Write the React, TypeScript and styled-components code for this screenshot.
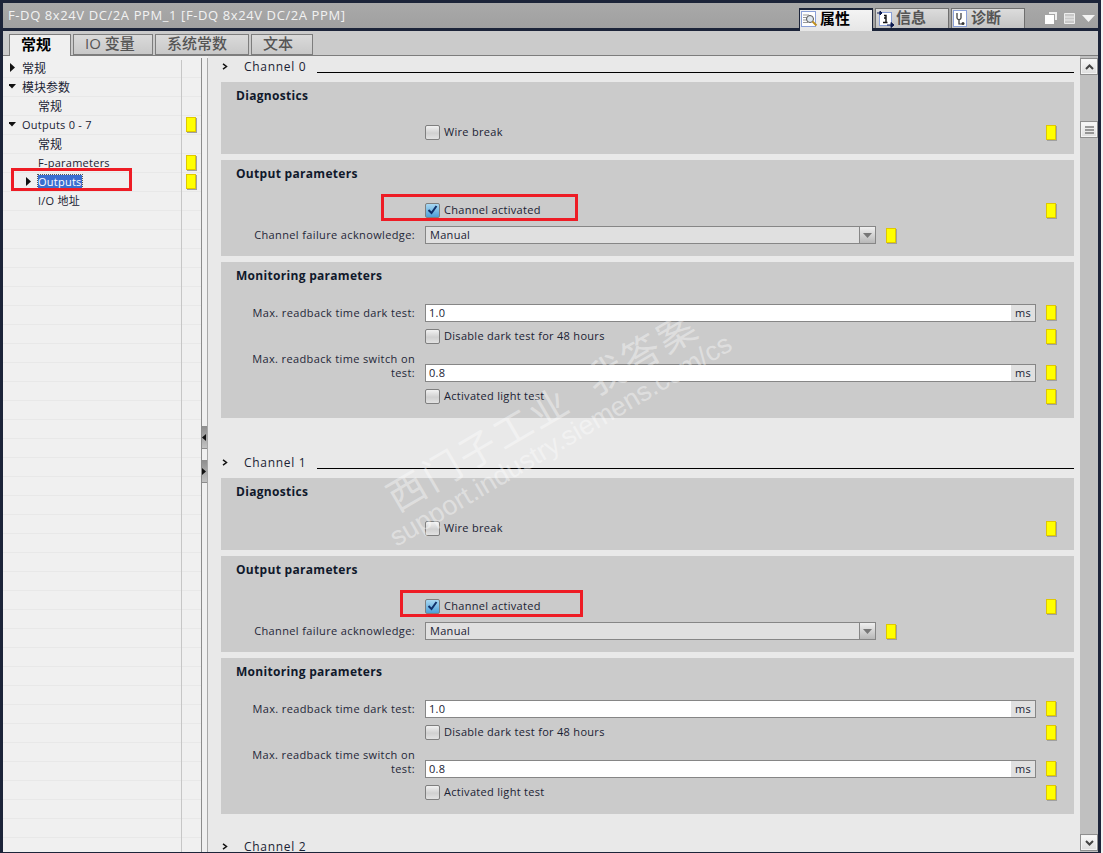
import React from "react";
import styled, { createGlobalStyle } from "styled-components";

const Global = createGlobalStyle`
  html, body { margin: 0; padding: 0; background: #1c2439; }
  #root { width: 1103px; height: 853px; }
  * { box-sizing: border-box; }
`;

const FONT = `"Open Sans", "Noto Sans", "Noto Sans CJK SC", sans-serif`;

const Frame = styled.div`
  position: relative;
  width: 1103px;
  height: 853px;
  padding: 3px 0 1px 3px;
  border-right: 2px solid #f2f2f2;
  background: #1c2439;
  overflow: hidden;
  font-family: ${FONT};
  font-size: 11px;
  color: #1a2233;
  display: flex;
  flex-direction: column;
`;

const TitleBar = styled.div`
  flex: none;
  height: 25px;
  margin-right: 3px;
  background: linear-gradient(#a9a9a9, #a0a0a0);
  display: flex;
  justify-content: space-between;
`;

const TitleText = styled.div`
  padding-left: 5px;
  line-height: 25px;
  font-size: 13px;
  font-weight: 500;
  color: #f2f2f2;
  white-space: nowrap;
  letter-spacing: 0.6px;
`;

const ViewTabs = styled.div`
  height: 25px;
  display: flex;
  align-items: flex-start;
  padding-top: 5px;
  gap: 2px;
`;

const ViewTab = styled.div<{ $active?: boolean }>`
  width: 74px;
  height: ${(p) => (p.$active ? 23 : 20)}px;
  display: flex;
  align-items: flex-start;
  gap: 2px;
  padding: 1px 0 0 1px;
  border: 1px solid ${(p) => (p.$active ? "#1c2439" : "#6f6f6f")};
  border-bottom: none;
  border-top-width: ${(p) => (p.$active ? 2 : 1)}px;
  background: ${(p) => (p.$active ? "linear-gradient(#f4f4f4, #e6e6e6)" : "linear-gradient(#dcdcdc, #c4c4c4)")};
  font-size: 15px;
  line-height: 15px;
  font-weight: 700;
  color: ${(p) => (p.$active ? "#000" : "#555")};
  position: relative;
  z-index: 1;
`;

const WindowButtons = styled.div`
  display: flex;
  align-items: center;
  gap: 7px;
  width: 71px;
  padding: 0 0 0 18px;
  height: 20px;
`;

const DarkLine = styled.div`
  flex: 0 0 3px;
  margin-right: 3px;
`;

const TabBar = styled.div`
  flex: none;
  height: 25px;
  margin-right: 3px;
  background: #cbcbcb;
  border-bottom: 1px solid #7d7d7d;
  display: flex;
  align-items: flex-end;
  padding-left: 6px;
  gap: 2px;
`;

const Tab = styled.div<{ $active?: boolean; $w: number }>`
  width: ${(p) => p.$w}px;
  height: ${(p) => (p.$active ? 22 : 21)}px;
  margin-bottom: ${(p) => (p.$active ? -1 : 0)}px;
  display: flex;
  align-items: center;
  padding: 0 0 4px 11px;
  border: 1px solid #7d7d7d;
  border-bottom: ${(p) => (p.$active ? "none" : "1px solid #7d7d7d")};
  background: ${(p) => (p.$active ? "#f0f0f0" : "linear-gradient(#dadada, #c8c8c8)")};
  font-size: 15px;
  font-weight: ${(p) => (p.$active ? 700 : 500)};
  color: ${(p) => (p.$active ? "#000" : "#555")};
  white-space: nowrap;
`;

const Body = styled.div`
  flex: 1;
  min-height: 0;
  display: flex;
  margin-right: 3px;
  background: #f0f0f0;
`;

const Tree = styled.div`
  flex: 0 0 198px;
  padding-top: 2px;
  background-color: #f0f0f0;
  background-image: repeating-linear-gradient(
    to bottom,
    transparent 0,
    transparent 18px,
    #e8e8e8 18px,
    #e8e8e8 19px
  );
  background-position: 0 3px;
  position: relative;
`;

const TreeDivider = styled.div`
  position: absolute;
  left: 178px;
  top: 4px;
  bottom: 0;
  width: 1px;
  background: #c6c6c6;
`;

const TreeRow = styled.div<{ $pad: number }>`
  height: 19px;
  display: flex;
  align-items: center;
  padding-left: ${(p) => p.$pad}px;
  position: relative;
`;

const TreeArrow = styled.svg`
  width: 7px;
  height: 9px;
  flex: 0 0 7px;
  margin-right: 6px;
`;

const TreeLabel = styled.span<{ $indent?: boolean; $selected?: boolean; $cjk?: boolean }>`
  margin-left: ${(p) => (p.$indent ? 16 : 0)}px;
  margin-top: ${(p) => (p.$cjk ? 2 : 0)}px;
  background: ${(p) => (p.$selected ? "#3a6ed0" : "transparent")};
  color: ${(p) => (p.$selected ? "#fff" : "#1a2233")};
  outline: ${(p) => (p.$selected ? "1px dotted #555" : "none")};
  font-size: ${(p) => (p.$cjk ? 12 : 11)}px;
  line-height: ${(p) => (p.$selected ? "13px" : "15px")};
  letter-spacing: ${(p) => (p.$cjk ? 0 : 0.25)}px;
  white-space: nowrap;
`;

const TreeMarkerSlot = styled.div`
  position: absolute;
  left: 183px;
  top: 2px;
`;

const Splitter = styled.div`
  flex: 0 0 7px;
  border-left: 1px solid #8c8c8c;
  border-right: 1px solid #a8a8a8;
  margin-top: 2px;
  background: #f0f0f0;
  padding-top: 368px;
  display: flex;
  flex-direction: column;
  gap: 11px;
`;

const SplitButton = styled.div`
  height: 23px;
  background: linear-gradient(#8d8d8d, #c2c2c2);
  border-bottom: 1px solid #8c8c8c;
  display: flex;
  align-items: center;
  justify-content: flex-start;
`;

const Content = styled.div`
  flex: 0 0 872px;
  background: #e9e9e9;
  padding: 0 6px 0 13px;
  overflow: hidden;
`;

const ChannelHeader = styled.div<{ $top: number }>`
  height: 26px;
  margin-top: ${(p) => p.$top}px;
  display: flex;
  align-items: center;
  padding-bottom: 6px;
`;

const Chevron = styled.svg`
  width: 6px;
  height: 7px;
  margin-left: 1px;
  margin-right: 16px;
  flex: 0 0 6px;
`;

const ChannelName = styled.span`
  font-size: 12px;
  letter-spacing: 0.7px;
  margin-right: 11px;
  white-space: nowrap;
`;

const ChannelRule = styled.div`
  flex: 1;
  height: 1px;
  background: #000;
  margin-top: 12px;
`;

const Group = styled.section<{ $h: number }>`
  height: ${(p) => p.$h}px;
  margin-bottom: 6px;
  background: #cbcbcb;
`;

const GroupTitle = styled.h3`
  margin: 0;
  height: 26px;
  padding: 1px 0 0 15px;
  font-size: 12px;
  line-height: 26px;
  font-weight: 700;
  letter-spacing: 0.3px;
  color: #10192b;
`;

const Rows = styled.div<{ $top: number; $gap: number }>`
  margin-top: ${(p) => p.$top}px;
  display: flex;
  flex-direction: column;
  gap: ${(p) => p.$gap}px;
`;

const Row = styled.div<{ $h?: number }>`
  height: ${(p) => p.$h ?? 18}px;
  display: grid;
  grid-template-columns: 194px 611px 10px;
  column-gap: 10px;
  align-items: end;
`;

const FieldLabel = styled.label`
  text-align: right;
  line-height: 14px;
  letter-spacing: 0.37px;
  padding: 0 0 2px 26px;
  color: #1f2738;
`;

const CheckField = styled.label`
  display: flex;
  align-items: center;
  gap: 4px;
  height: 18px;
  letter-spacing: 0.3px;
  white-space: nowrap;
`;

const CheckText = styled.span`
  margin-top: -2px;
`;

const CheckBox = styled.span<{ $checked?: boolean }>`
  width: 15px;
  height: 15px;
  flex: 0 0 15px;
  border: 1px solid #7f7f7f;
  border-radius: 2px;
  background: ${(p) =>
    p.$checked ? "linear-gradient(#a9d8f2, #4d9fd8)" : "linear-gradient(#f2f2f2, #d0d0d0 55%, #e2e2e2)"};
  display: flex;
  align-items: center;
  justify-content: center;
`;

const InputBox = styled.div`
  height: 18px;
  border: 1px solid #868686;
  background: #fff;
  display: flex;
  align-items: stretch;
  justify-content: space-between;
  padding-left: 3px;
  line-height: 16px;
  letter-spacing: 0.3px;
`;

const Unit = styled.span`
  width: 24px;
  background: #e0e0e0;
  text-align: center;
`;

const ComboWrap = styled.div`
  display: flex;
  align-items: center;
  gap: 10px;
`;

const Combo = styled.div`
  width: 451px;
  height: 18px;
  border: 1px solid #868686;
  background: #e0e0e0;
  display: flex;
  justify-content: space-between;
  padding-left: 4px;
  line-height: 16px;
  letter-spacing: 0.3px;
`;

const ComboButton = styled.span`
  width: 16px;
  border-left: 1px solid #868686;
  background: linear-gradient(#f0f0f0, #b8b8b8);
  display: flex;
  align-items: center;
  justify-content: center;
`;

const Marker = styled.span<{ $lift?: number }>`
  display: block;
  width: 10px;
  height: 15px;
  background: #ffff00;
  border: 1px solid #e0c800;
  box-shadow: 1px 1px 0 #a0a0a0;
  margin-bottom: ${(p) => p.$lift ?? 0}px;
`;

const ScrollColumn = styled.div`
  flex: 1;
  background: #c0c0c0;
  padding-top: 2px;
  position: relative;
  display: flex;
  flex-direction: column;
`;

const ScrollButton = styled.div<{ $thumb?: boolean }>`
  height: 17px;
  margin-top: ${(p) => (p.$thumb ? 46 : 0)}px;
  background: linear-gradient(#fafafa, #dedede);
  border: 1px solid #8f8f8f;
  outline: 1px solid #f4f4f4;
  outline-offset: -2px;
  display: flex;
  align-items: center;
  justify-content: center;
`;

const ScrollEnd = styled(ScrollButton)`
  margin-top: auto;
  margin-bottom: 1px;
`;

const Annotation = styled.div<{ $x: number; $y: number; $w: number; $h: number }>`
  position: absolute;
  left: ${(p) => p.$x}px;
  top: ${(p) => p.$y}px;
  width: ${(p) => p.$w}px;
  height: ${(p) => p.$h}px;
  border: 3px solid #ee1c25;
  pointer-events: none;
`;

const Watermark = styled.div`
  position: absolute;
  left: 400px;
  top: 483px;
  width: 420px;
  transform: rotate(-30.4deg);
  transform-origin: 0 100%;
  color: rgba(255, 255, 255, 0.4);
  pointer-events: none;
  white-space: nowrap;
`;

const WatermarkCn = styled.div`
  padding-left: 18px;
  font-size: 38px;
  line-height: 38px;
  letter-spacing: 3px;
  font-weight: 400;
`;

const WatermarkUrl = styled.div`
  font-family: "Liberation Sans", sans-serif;
  font-size: 27px;
  line-height: 32px;
`;

const ArrowRight = () => (
  <TreeArrow viewBox="0 0 7 9"><path d="M1 0l5 4.500L1 9z" fill="#111" /></TreeArrow>
);
const ArrowDown = () => (
  <TreeArrow viewBox="0 0 7 9"><path d="M-1 2h8L3 6.500z" fill="#111" /></TreeArrow>
);

const ChannelHead = ({ name, top }: { name: string; top: number }) => (
  <ChannelHeader $top={top}>
    <Chevron viewBox="0 0 6 7"><path d="M1 .8L4.500 3.500 1 6.200" fill="none" stroke="#111" strokeWidth="1.500" /></Chevron>
    <ChannelName>{name}</ChannelName>
    <ChannelRule />
  </ChannelHeader>
);

const Check = ({ checked, label }: { checked?: boolean; label: string }) => (
  <CheckField>
    <CheckBox $checked={checked}>
      {checked && (
        <svg width="11" height="10" viewBox="0 0 11 10">
          <path d="M1.500 5l3 3 5-7" fill="none" stroke="#10306a" strokeWidth="2" />
        </svg>
      )}
    </CheckBox>
    <CheckText>{label}</CheckText>
  </CheckField>
);

const CheckRow = ({ checked, label }: { checked?: boolean; label: string }) => (
  <Row>
    <span />
    <Check checked={checked} label={label} />
    <Marker $lift={1} />
  </Row>
);

const InputRow = ({ label, value, h }: { label: string; value: string; h?: number }) => (
  <Row $h={h}>
    <FieldLabel>{label}</FieldLabel>
    <InputBox>
      {value}
      <Unit>ms</Unit>
    </InputBox>
    <Marker $lift={2} />
  </Row>
);

const Channel = ({ name, top }: { name: string; top: number }) => (
  <>
    <ChannelHead name={name} top={top} />
    <Group $h={72}>
      <GroupTitle>Diagnostics</GroupTitle>
      <Rows $top={15} $gap={5}>
        <CheckRow label="Wire break" />
      </Rows>
    </Group>
    <Group $h={96}>
      <GroupTitle>Output parameters</GroupTitle>
      <Rows $top={15} $gap={7}>
        <CheckRow checked label="Channel activated" />
        <Row>
          <FieldLabel>Channel failure acknowledge:</FieldLabel>
          <ComboWrap>
            <Combo>
              Manual
              <ComboButton>
                <svg width="9" height="5" viewBox="0 0 9 5"><path d="M0 0h9L4.500 5z" fill="#777" /></svg>
              </ComboButton>
            </Combo>
            <Marker />
          </ComboWrap>
          <span />
        </Row>
      </Rows>
    </Group>
    <Group $h={156}>
      <GroupTitle>Monitoring parameters</GroupTitle>
      <Rows $top={16} $gap={5}>
        <InputRow label="Max. readback time dark test:" value="1.0" />
        <CheckRow label="Disable dark test for 48 hours" />
        <InputRow label="Max. readback time switch on test:" value="0.8" h={32} />
        <CheckRow label="Activated light test" />
      </Rows>
    </Group>
  </>
);

const PropsIcon = () => (
  <svg width="17" height="17" viewBox="0 0 17 17">
    <rect x=".5" y=".5" width="14" height="15" fill="#fff" stroke="#8aa0d8" />
    <path d="M2 4h6M2 6.500h4M2 9h4M2 11.500h5" stroke="#999" />
    <circle cx="9" cy="8" r="3.500" fill="#dfe8f0" stroke="#555" />
    <path d="M11.500 10.500l4 4" stroke="#c09020" strokeWidth="2" />
  </svg>
);
const InfoIcon = () => (
  <svg width="17" height="18" viewBox="0 0 17 18">
    <rect x="2.500" y="2.500" width="12" height="13" fill="#fff" stroke="#8aa0d8" />
    <path d="M7 5.500h2v7M6 12.500h4.500M7 8h2" fill="none" stroke="#111" strokeWidth="1.400" />
    <path d="M0 3h3M3 1v4l2-2zM10 15h5M14 12.500v5l3-2.500z" fill="#0c1a50" stroke="#0c1a50" />
  </svg>
);
const DiagIcon = () => (
  <svg width="16" height="18" viewBox="0 0 16 18">
    <rect x=".5" y=".5" width="13" height="16" fill="#fff" stroke="#8aa0d8" />
    <path d="M4 3v5c0 2 4 2 4 0V3M6 10v4h3" fill="none" stroke="#333" strokeWidth="1.200" />
    <circle cx="10" cy="13.500" r="1.500" fill="#333" />
  </svg>
);

type Node = { t: string; pad: number; arrow?: "r" | "d"; marker?: boolean; selected?: boolean; indent?: boolean; cjk?: boolean };

const tree: Node[] = [
  { t: "常规", pad: 6, arrow: "r", cjk: true },
  { t: "模块参数", pad: 6, arrow: "d", cjk: true },
  { t: "常规", pad: 19, indent: true, cjk: true },
  { t: "Outputs 0 - 7", pad: 6, arrow: "d", marker: true },
  { t: "常规", pad: 19, indent: true, cjk: true },
  { t: "F-parameters", pad: 19, indent: true, marker: true },
  { t: "Outputs", pad: 22, arrow: "r", marker: true, selected: true },
  { t: "I/O 地址", pad: 19, indent: true },
];

export default function App() {
  return (
    <Frame>
      <Global />
      <TitleBar>
        <TitleText>F-DQ 8x24V DC/2A PPM_1 [F-DQ 8x24V DC/2A PPM]</TitleText>
        <ViewTabs>
          <ViewTab $active><PropsIcon />属性</ViewTab>
          <ViewTab><InfoIcon />信息</ViewTab>
          <ViewTab><DiagIcon />诊断</ViewTab>
          <WindowButtons>
            <svg width="12" height="12" viewBox="0 0 12 12">
              <path d="M4 0h8v8h-2V2H4z" fill="#eee" /><rect x="0" y="3" width="9" height="9" fill="#fff" />
            </svg>
            <svg width="11" height="11" viewBox="0 0 11 11">
              <path d="M.5.500h10v10H.5zM0 4h11M0 7h11" fill="#c8c8c8" stroke="#eee" />
            </svg>
            <svg width="13" height="7" viewBox="0 0 13 7"><path d="M0 0h13L6.500 7z" fill="#f4f4f4" /></svg>
          </WindowButtons>
        </ViewTabs>
      </TitleBar>
      <DarkLine />
      <TabBar>
        <Tab $active $w={62}>常规</Tab>
        <Tab $w={80}>IO 变量</Tab>
        <Tab $w={94}>系统常数</Tab>
        <Tab $w={62}>文本</Tab>
      </TabBar>
      <Body>
        <Tree>
          <TreeDivider />
          {tree.map((n, i) => (
            <TreeRow key={i} $pad={n.pad}>
              {n.arrow === "r" && <ArrowRight />}
              {n.arrow === "d" && <ArrowDown />}
              <TreeLabel $indent={n.indent} $selected={n.selected} $cjk={n.cjk}>{n.t}</TreeLabel>
              {n.marker && <TreeMarkerSlot><Marker /></TreeMarkerSlot>}
            </TreeRow>
          ))}
        </Tree>
        <Splitter>
          <SplitButton>
            <svg width="4" height="7" viewBox="0 0 4 7"><path d="M4 0v7L0 3.500z" fill="#111" /></svg>
          </SplitButton>
          <SplitButton>
            <svg width="4" height="7" viewBox="0 0 4 7"><path d="M0 0v7l4-3.500z" fill="#111" /></svg>
          </SplitButton>
        </Splitter>
        <Content>
          <Channel name="Channel 0" top={0} />
          <Channel name="Channel 1" top={34} />
          <ChannelHead name="Channel 2" top={22} />
        </Content>
        <ScrollColumn>
          <ScrollButton>
            <svg width="9" height="6" viewBox="0 0 9 6"><path d="M1 5l3.500-3.500L8 5" fill="none" stroke="#444" strokeWidth="2" /></svg>
          </ScrollButton>
          <ScrollButton $thumb>
            <svg width="9" height="8" viewBox="0 0 9 8"><path d="M0 1h9M0 4h9M0 7h9" stroke="#444" /></svg>
          </ScrollButton>
          <ScrollEnd>
            <svg width="9" height="6" viewBox="0 0 9 6"><path d="M1 1l3.500 3.500L8 1" fill="none" stroke="#444" strokeWidth="2" /></svg>
          </ScrollEnd>
        </ScrollColumn>
      </Body>
      <Watermark>
        <WatermarkCn>西门子工业 &nbsp;我答案</WatermarkCn>
        <WatermarkUrl>support.industry.siemens.com/cs</WatermarkUrl>
      </Watermark>
      <Annotation $x={11} $y={168} $w={121} $h={23} />
      <Annotation $x={381} $y={194} $w={197} $h={27} />
      <Annotation $x={400} $y={590} $w={183} $h={27} />
    </Frame>
  );
}
